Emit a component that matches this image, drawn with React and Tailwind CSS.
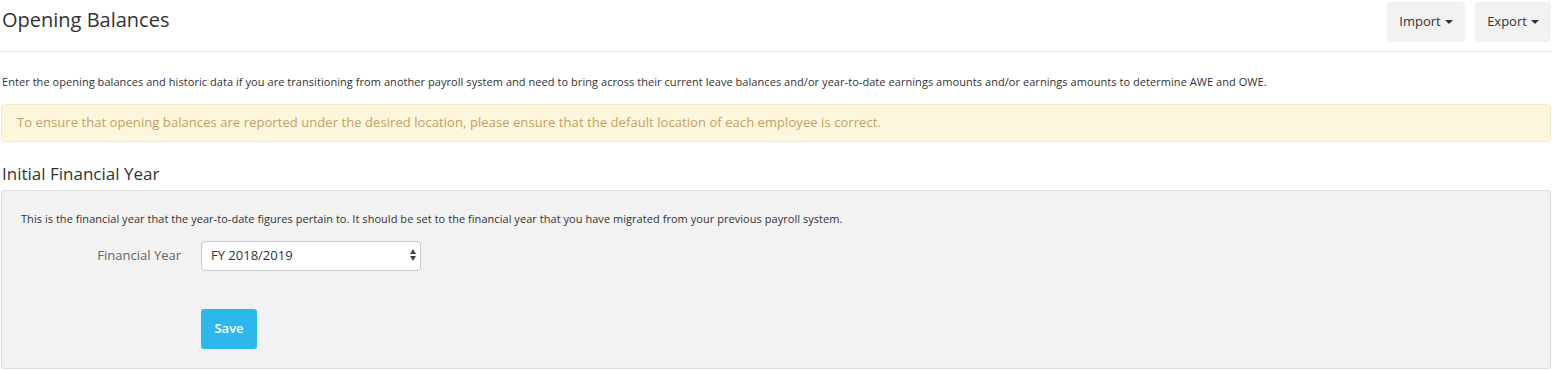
import React, { useState } from "react";

const font = { fontFamily: "'Open Sans', Lato, Arial, sans-serif" };

const Caret = () => (
  <span className="ml-1 inline-block w-0 h-0 border-l-[4px] border-r-[4px] border-t-[4px] border-l-transparent border-r-transparent border-t-[#333] align-middle" />
);

const App = () => {
  const [year, setYear] = useState("FY 2018/2019");

  return (
    <div className="w-[1552px] h-[370px] bg-white text-[#333] overflow-hidden" style={font}>
      {/* Header */}
      <div className="flex justify-between items-start h-[52px] border-b border-[#e5e5e5] pl-[2px] pr-[1px] pt-[2px]">
        <h1 className="text-[20px] leading-[36px] font-normal text-[#333]">Opening Balances</h1>
        <div className="flex gap-[10px]">
          <button className="h-[40px] w-[78px] rounded-[4px] bg-[#f2f2f2] text-[13px] text-[#333] flex items-center justify-center">
            Import<Caret />
          </button>
          <button className="h-[40px] w-[76px] rounded-[4px] bg-[#f2f2f2] text-[13px] text-[#333] flex items-center justify-center">
            Export<Caret />
          </button>
        </div>
      </div>

      <p className="text-[11px] tracking-[0.005em] pl-[2px] mt-[22px] leading-[16px]">
        Enter the opening balances and historic data if you are transitioning from another payroll system and need to bring across their current leave balances and/or year-to-date earnings amounts and/or earnings amounts to determine AWE and OWE.
      </p>

      {/* Alert */}
      <div className="mt-[14px] ml-[1px] mr-[1px] h-[38px] flex items-center px-[15px] bg-[#fcf6dd] border border-[#fae9c7] rounded-[3px] text-[13px] tracking-[0.005em] text-[#c5a063]">
        To ensure that opening balances are reported under the desired location, please ensure that the default location of each employee is correct.
      </div>

      <h2 className="mt-[21px] pl-[2px] text-[17px] leading-[22px] text-[#333]">Initial Financial Year</h2>

      {/* Panel */}
      <div className="mt-[5px] ml-[1px] mr-[1px] h-[179px] bg-[#f2f2f2] border border-[#dcdcdc] rounded-[3px] px-[19px] pt-[20px]">
        <p className="text-[11px] tracking-[0.004em] leading-[16px]">
          This is the financial year that the year-to-date figures pertain to. It should be set to the financial year that you have migrated from your previous payroll system.
        </p>
        <div className="flex items-center mt-[14px]">
          <label className="w-[180px] pr-[20px] text-right text-[13px] text-[#666]">Financial Year</label>
          <div className="relative w-[220px] h-[30px]">
            <select
              value={year}
              onChange={(e) => setYear(e.target.value)}
              className="appearance-none w-full h-full bg-white border border-[#c8c8c8] rounded-[4px] pl-[9px] text-[13px] text-[#333] outline-none"
            >
              <option>FY 2018/2019</option>
              <option>FY 2019/2020</option>
            </select>
            <div className="absolute right-[5px] top-[8px] flex flex-col gap-[2px] pointer-events-none">
              <span className="w-0 h-0 border-l-[3px] border-r-[3px] border-b-[5px] border-l-transparent border-r-transparent border-b-[#444]" />
              <span className="w-0 h-0 border-l-[3px] border-r-[3px] border-t-[5px] border-l-transparent border-r-transparent border-t-[#444]" />
            </div>
          </div>
        </div>
        <div className="mt-[38px] pl-[180px]">
          <button className="w-[56px] h-[40px] rounded-[3px] bg-[#2cb8ec] text-white text-[13px] font-semibold">Save</button>
        </div>
      </div>
    </div>
  );
};

export default App;
